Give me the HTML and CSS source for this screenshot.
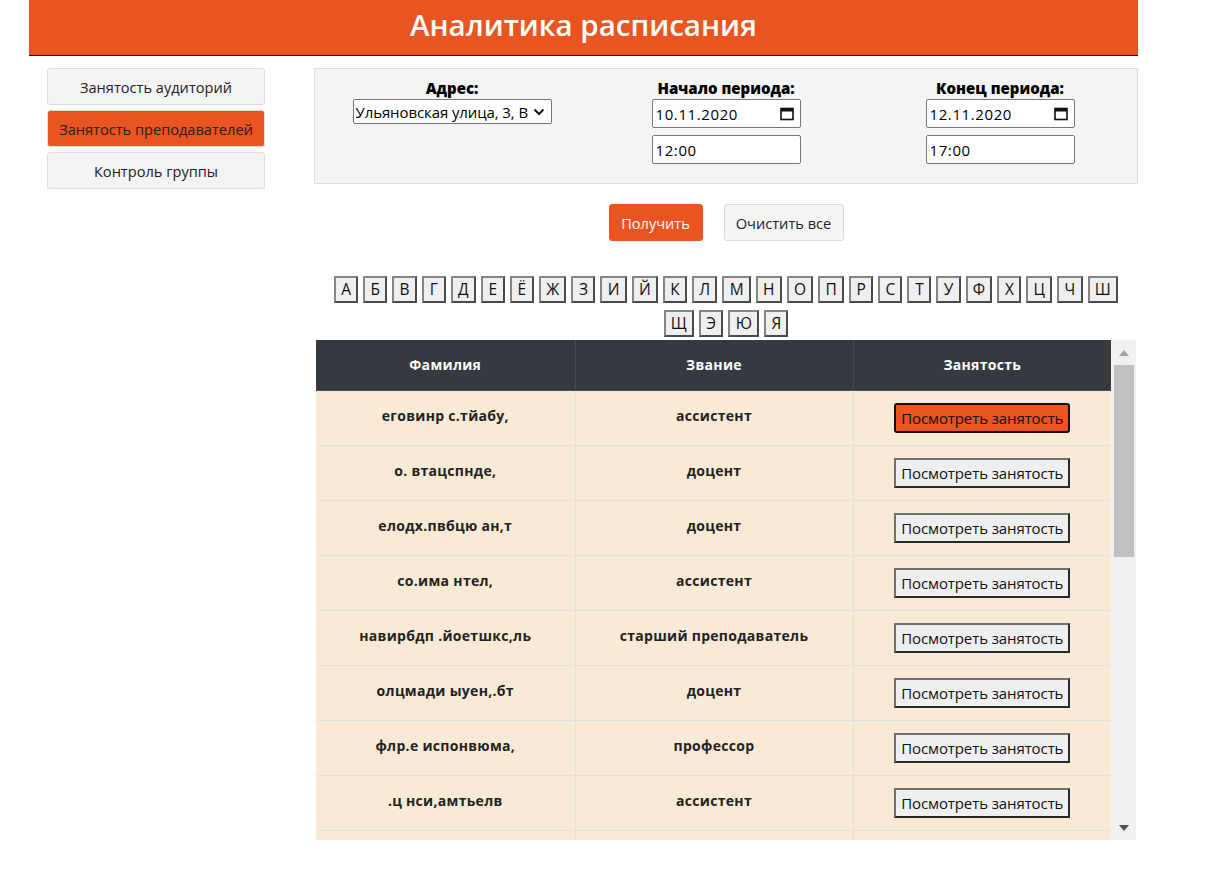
FILE: index.html
```html
<!DOCTYPE html>
<html lang="ru">
<head>
<meta charset="utf-8">
<title>Аналитика расписания</title>
<link rel="stylesheet" href="styles.css">
</head>
<body>
<div class="page">
  <header class="topbar"><h1 class="title">Аналитика расписания</h1></header>
  <div class="layout">
    <nav class="sidebar">
      <a class="nav-item">Занятость аудиторий</a>
      <a class="nav-item active">Занятость преподавателей</a>
      <a class="nav-item">Контроль группы</a>
    </nav>
    <main class="main">
      <section class="filters">
        <div class="fcol">
          <div class="flabel">Адрес:</div>
          <div class="selectbox"><span class="seltext">Ульяновская улица, 3, В</span>
            <svg class="chev" width="12" height="8" viewBox="0 0 12 8"><path d="M1.5 1.5 L6 6 L10.5 1.5" fill="none" stroke="#111" stroke-width="2"/></svg>
          </div>
        </div>
        <div class="fcol">
          <div class="flabel">Начало периода:</div>
          <div class="field date"><span>10.11.2020</span>
            <svg width="14" height="14" viewBox="0 0 14 14"><rect x="1" y="1.5" width="12" height="11" fill="none" stroke="#111" stroke-width="1.6"/><rect x="1" y="1.5" width="12" height="3" fill="#111"/></svg>
          </div>
          <div class="field"><span>12:00</span></div>
        </div>
        <div class="fcol">
          <div class="flabel">Конец периода:</div>
          <div class="field date"><span>12.11.2020</span>
            <svg width="14" height="14" viewBox="0 0 14 14"><rect x="1" y="1.5" width="12" height="11" fill="none" stroke="#111" stroke-width="1.6"/><rect x="1" y="1.5" width="12" height="3" fill="#111"/></svg>
          </div>
          <div class="field"><span>17:00</span></div>
        </div>
      </section>
      <div class="actions">
        <button class="btn btn-primary">Получить</button>
        <button class="btn btn-light">Очистить все</button>
      </div>
      <div class="alphabet">
        <div class="arow">
          <button class="letter">А</button><button class="letter">Б</button><button class="letter">В</button><button class="letter">Г</button><button class="letter">Д</button><button class="letter">Е</button><button class="letter">Ё</button><button class="letter">Ж</button><button class="letter">З</button><button class="letter">И</button><button class="letter">Й</button><button class="letter">К</button><button class="letter">Л</button><button class="letter">М</button><button class="letter">Н</button><button class="letter">О</button><button class="letter">П</button><button class="letter">Р</button><button class="letter">С</button><button class="letter">Т</button><button class="letter">У</button><button class="letter">Ф</button><button class="letter">Х</button><button class="letter">Ц</button><button class="letter">Ч</button><button class="letter">Ш</button>
        </div>
        <div class="arow">
          <button class="letter">Щ</button><button class="letter">Э</button><button class="letter">Ю</button><button class="letter">Я</button>
        </div>
      </div>
      <div class="tablebox">
        <div class="tablewrap">
          <table class="tbl">
            <colgroup><col class="c1"><col class="c2"><col class="c3"></colgroup>
            <thead><tr><th>Фамилия</th><th>Звание</th><th>Занятость</th></tr></thead>
            <tbody>
              <tr><td>еговинр с.тйабу,</td><td>ассистент</td><td><button class="view active">Посмотреть занятость</button></td></tr>
              <tr><td>о. втацспнде,</td><td>доцент</td><td><button class="view">Посмотреть занятость</button></td></tr>
              <tr><td>елодх.пвбцю ан,т</td><td>доцент</td><td><button class="view">Посмотреть занятость</button></td></tr>
              <tr><td>со.има нтел,</td><td>ассистент</td><td><button class="view">Посмотреть занятость</button></td></tr>
              <tr><td>навирбдп .йоетшкс,ль</td><td>старший преподаватель</td><td><button class="view">Посмотреть занятость</button></td></tr>
              <tr><td>олцмади ыуен,.бт</td><td>доцент</td><td><button class="view">Посмотреть занятость</button></td></tr>
              <tr><td>флр.е испонвюма,</td><td>профессор</td><td><button class="view">Посмотреть занятость</button></td></tr>
              <tr><td>.ц нси,амтьелв</td><td>ассистент</td><td><button class="view">Посмотреть занятость</button></td></tr>
              <tr class="tail"><td></td><td></td><td></td></tr>
            </tbody>
          </table>
        </div>
        <div class="scrollbar">
          <div class="sb-btn"><svg width="10" height="6" viewBox="0 0 10 6"><polygon points="0,6 5,0 10,6" fill="#a3a3a3"/></svg></div>
          <div class="sb-track"><div class="sb-thumb"></div></div>
          <div class="sb-btn"><svg width="10" height="6" viewBox="0 0 10 6"><polygon points="0,0 5,6 10,0" fill="#505050"/></svg></div>
        </div>
      </div>
    </main>
  </div>
</div>
</body>
</html>
```
FILE: styles.css
```css
* { box-sizing: border-box; }
html, body { margin: 0; padding: 0; background: #fff; }
body { font-family: "Open Sans", "Noto Sans", sans-serif; color: #222; }

.page { width: 1109px; margin-left: 29px; }

.topbar {
  height: 56px;
  background: #e95420;
  border-bottom: 1px solid #111;
  display: flex;
  align-items: center;
  justify-content: center;
}
.title {
  margin: 0;
  color: #fff;
  font-weight: 600;
  font-size: 29.5px;
  line-height: 1;
  padding-bottom: 6px;
}

.layout {
  display: grid;
  grid-template-columns: 285px 824px;
  padding-top: 12px;
}

.sidebar {
  padding-left: 18px;
  display: flex;
  flex-direction: column;
  gap: 5px;
}
.nav-item {
  width: 218px;
  height: 37px;
  display: flex;
  align-items: center;
  justify-content: center;
  background: #f4f4f4;
  border: 1px solid #dddddd;
  border-radius: 3px;
  font-size: 14.6px;
  color: #222;
}
.nav-item.active { background: #e95420; border-color: #dddddd; }

.main { display: flex; flex-direction: column; }

.filters {
  height: 116px;
  background: #f4f4f4;
  border: 1px solid #dddddd;
  display: grid;
  grid-template-columns: 1fr 1fr 1fr;
  padding-top: 9px;
}
.fcol { display: flex; flex-direction: column; align-items: center; }
.flabel {
  font-weight: 800;
  font-size: 15px;
  line-height: 20px;
  color: #000;
  margin-bottom: 1px;
}
.selectbox {
  width: 199px;
  height: 25px;
  background: #fff;
  border: 1px solid #767676;
  border-radius: 2px;
  display: flex;
  align-items: center;
  justify-content: space-between;
  padding: 0 6px 0 2px;
  font-size: 15px;
  color: #000;
  white-space: nowrap;
  overflow: hidden;
}
.seltext { letter-spacing: -0.1px; }
.field {
  width: 149px;
  height: 29px;
  background: #fff;
  border: 1px solid #767676;
  border-radius: 2px;
  display: flex;
  align-items: center;
  justify-content: space-between;
  padding: 0 6px 0 3px;
  font-size: 15px;
  color: #000;
  margin-bottom: 7px;
}
.field span { letter-spacing: 0.6px; }

.actions {
  display: flex;
  justify-content: center;
  gap: 21px;
  margin-top: 20px;
}
.btn {
  height: 37px;
  border-radius: 3px;
  font-family: inherit;
  font-size: 14.6px;
  padding: 0;
  cursor: pointer;
}
.btn-primary { background: #e95420; color: #fff; border: 1px solid #e95420; width: 94px; }
.btn-light { background: #f4f4f4; color: #222; border: 1px solid #dddddd; width: 120px; }

.alphabet {
  margin-top: 35px;
  display: flex;
  flex-direction: column;
  gap: 7px;
}
.arow { display: flex; justify-content: center; gap: 5px; }
.letter {
  height: 27px;
  min-width: 24px;
  padding: 0 5.25px;
  background: #efefef;
  border-style: solid;
  border-width: 2px;
  border-color: #858585 #4a4a4a #4a4a4a #858585;
  font-family: "Open Sans", sans-serif;
  font-weight: 400;
  font-size: 15.5px;
  color: #111;
  line-height: 1;
}

.tablebox {
  margin: 3px 2px 0 2px;
  height: 500px;
  display: flex;
}
.tablewrap {
  flex: 1;
  overflow: hidden;
  background: #fff;
}
.scrollbar {
  width: 25px;
  background: #f1f1f1;
  display: flex;
  flex-direction: column;
}
.sb-btn {
  height: 25px;
  display: flex;
  align-items: center;
  justify-content: center;
  padding-left: 1px;
}
.sb-track { flex: 1; padding: 0 2px 0 3px; }
.sb-thumb { height: 192px; background: #c1c1c1; }

.tbl {
  width: 100%;
  border-collapse: collapse;
  table-layout: fixed;
}
.c1 { width: 259px; }
.c2 { width: 278px; }
.c3 { width: auto; }
.tbl th {
  height: 50px;
  background: #343a40;
  color: #fff;
  font-weight: 700;
  font-size: 14px;
  letter-spacing: 0.3px;
  text-align: center;
  border: 1px solid #454d55;
  border-top: none;
}
.tbl td {
  height: 55px;
  background: #f9ead6;
  border: 1px solid #dee2e6;
  font-weight: 700;
  font-size: 14px;
  color: #222;
  text-align: center;
  letter-spacing: 0.3px;
  padding: 0 0 5px 0;
}
.tbl td:first-child, .tbl th:first-child { border-left: none; }
.tbl td:last-child, .tbl th:last-child { border-right: none; }

.view {
  width: 176px;
  height: 30px;
  background: #efefef;
  border-style: solid;
  border-width: 2px;
  border-color: #707070 #2a2a2a #2a2a2a #707070;
  font-family: "Open Sans", sans-serif;
  font-size: 15px;
  font-weight: 400;
  color: #111;
  padding: 0;
  margin-top: 6px;
  letter-spacing: -0.1px;
}
.view.active {
  background: #e95420;
  border: 2px solid #111;
  border-radius: 3px;
}
```
